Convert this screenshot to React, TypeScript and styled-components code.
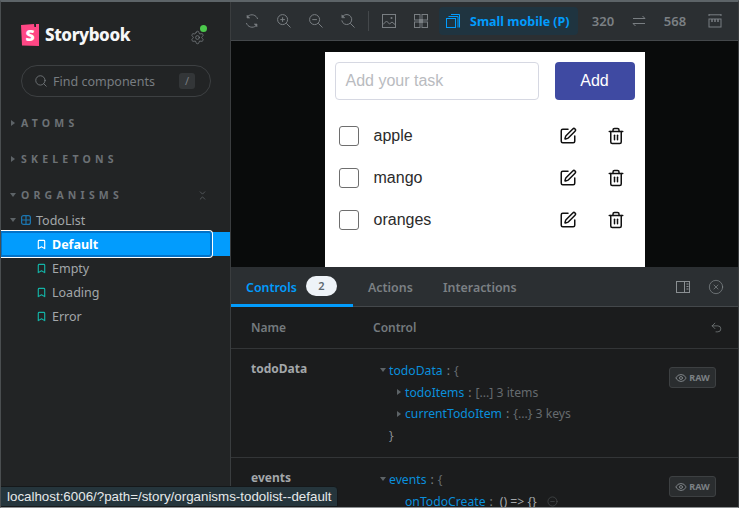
import React from 'react'
import styled, { createGlobalStyle } from 'styled-components'
import { Bookmark, ChevronsDownUp, Search, Settings, SquarePen, Trash2, Undo2, Eye, CircleX, CircleMinus } from 'lucide-react'

const GlobalStyle = createGlobalStyle`
  html, body {
    margin: 0;
    padding: 0;
    background: #222425;
  }
  * {
    box-sizing: border-box;
  }
`

const UI_FONT = `"Noto Sans", "Open Sans", sans-serif`
const BLUE = '#029cfd'

const Window = styled.div`
  position: relative;
  width: 739px;
  height: 508px;
  display: flex;
  overflow: hidden;
  border-top: 2px solid #5d6468;
  border-left: 1px solid #4a4e50;
  border-right: 1px solid #3c3f41;
  border-bottom: 1px solid #8d9092;
  font-family: ${UI_FONT};
  background: #222425;
`

// sidebar
const Sidebar = styled.aside`
  width: 230px;
  flex: none;
  display: flex;
  flex-direction: column;
  background: #222425;
  border-right: 1px solid #3a3d3f;
`
const Brand = styled.div`
  display: flex;
  align-items: center;
  height: 22px;
  margin: 22px 0 0 20px;
  padding-right: 25px;
`
const BrandName = styled.span`
  margin-left: 6px;
  font-size: 17px;
  line-height: 22px;
  font-weight: 800;
  color: #f6f7f8;
  letter-spacing: -0.4px;
`
const GearWrap = styled.div`
  position: relative;
  width: 15px;
  height: 15px;
  margin-left: auto;
  color: #7b8084;
`
const StatusDot = styled.span`
  position: absolute;
  top: -3px;
  right: -2px;
  width: 7px;
  height: 7px;
  border-radius: 50%;
  background: #4cc94c;
`
const SearchBox = styled.div`
  display: flex;
  align-items: center;
  width: 190px;
  height: 32px;
  margin: 19px 0 0 20px;
  padding: 0 15px 0 12px;
  border: 1px solid #3d4042;
  border-radius: 16px;
  color: #787d81;
  font-size: 12.5px;
`
const SearchLabel = styled.span`
  margin-left: 5px;
  flex: 1;
`
const Key = styled.span`
  width: 16px;
  height: 16px;
  border-radius: 3px;
  background: #333638;
  font-size: 11px;
  line-height: 16px;
  text-align: center;
`
const SectionList = styled.div`
  margin-top: 8px;
  display: flex;
  flex-direction: column;
`
const Section = styled.div`
  display: flex;
  align-items: center;
  height: 36px;
  padding: 0 22px 0 9px;
  color: #6c7175;
  font-size: 10.5px;
  font-weight: 700;
  letter-spacing: 0.4em;
`
const Caret = styled.span<{ $open?: boolean }>`
  flex: none;
  width: 11px;
  display: flex;
  justify-content: flex-start;
  &::before {
    content: '';
    display: block;
    ${(p) =>
      p.$open
        ? `margin-left: 0; border-left: 3.5px solid transparent; border-right: 3.5px solid transparent; border-top: 4px solid #5d6367;`
        : `margin-left: 1px; border-top: 3.5px solid transparent; border-bottom: 3.5px solid transparent; border-left: 4px solid #5d6367;`}
  }
`
const SectionAction = styled.span`
  margin-left: auto;
  display: flex;
  color: #6c7175;
`
const Tree = styled.div`
  position: relative;
  margin-top: -5px;
  display: flex;
  flex-direction: column;
`
const ComponentRow = styled.div`
  display: flex;
  align-items: center;
  height: 24px;
  padding-left: 9px;
  color: #a3a7aa;
  font-size: 12.5px;
`
const ComponentName = styled.span`
  margin-left: 5px;
`
const StoryRow = styled.div<{ $selected?: boolean }>`
  position: relative;
  display: flex;
  align-items: center;
  height: 24px;
  padding-left: 35px;
  color: ${(p) => (p.$selected ? '#fff' : '#a3a7aa')};
  background: ${(p) => (p.$selected ? BLUE : 'transparent')};
  font-size: 12.5px;
  font-weight: ${(p) => (p.$selected ? 700 : 400)};
  svg {
    color: ${(p) => (p.$selected ? '#fff' : '#13b3a6')};
  }
`
const StoryName = styled.span`
  margin-left: 5px;
`
const FocusRing = styled.span`
  position: absolute;
  top: -2px;
  bottom: -2px;
  left: -1px;
  width: 213px;
  border: 1px solid #fff;
  border-left: none;
  border-radius: 0 4px 4px 0;
  box-shadow: inset 0 0 0 2px #0272c8;
`

// main column
const Main = styled.main`
  flex: 1;
  min-width: 0;
  display: flex;
  flex-direction: column;
`
const Toolbar = styled.div`
  height: 39px;
  flex: none;
  display: flex;
  align-items: center;
  padding-left: 14px;
  background: #2b2f32;
  border-bottom: 1px solid #44484b;
  color: #797e82;
`
const ToolIcon = styled.span<{ $gap?: number }>`
  width: 14px;
  height: 14px;
  flex: none;
  display: flex;
  margin-right: ${(p) => p.$gap ?? 18}px;
`
const ToolDivider = styled.span`
  width: 1px;
  height: 20px;
  margin: 0 13px 0 -1px;
  background: #44484b;
`
const ViewportButton = styled.div`
  display: flex;
  align-items: center;
  height: 28px;
  width: 139px;
  margin: 0 13px 0 -7px;
  padding-left: 7px;
  border-radius: 4px;
  background: #1f3440;
  color: ${BLUE};
  font-size: 12.5px;
  font-weight: 700;
`
const ViewportLabel = styled.span`
  margin-left: 10px;
  white-space: nowrap;
`
const Dimension = styled.span`
  font-size: 13px;
  font-weight: 600;
  color: #7b8084;
  width: 24px;
  text-align: center;
`
const SwapSlot = styled.span`
  width: 14px;
  height: 14px;
  flex: none;
  display: flex;
  margin: 0 17px;
`
const RulerSlot = styled.span`
  width: 14px;
  height: 14px;
  flex: none;
  display: flex;
  margin-left: 21px;
`
const Canvas = styled.div`
  height: 226px;
  flex: none;
  display: flex;
  justify-content: center;
  padding-top: 11px;
  background: #090b0b;
`
const Frame = styled.div`
  width: 320px;
  background: #fff;
  padding: 10px;
  font-family: "Liberation Sans", Arial, sans-serif;
`
const TaskForm = styled.div`
  display: flex;
  justify-content: space-between;
`
const TaskInput = styled.div`
  width: 204px;
  height: 38px;
  padding: 0 10px;
  border: 1px solid #d6d8e2;
  border-radius: 4px;
  color: #b9bbc0;
  font-size: 16px;
  line-height: 36px;
`
const AddButton = styled.div`
  width: 80px;
  height: 38px;
  border-radius: 4px;
  background: #3f4aa2;
  color: #fff;
  font-size: 16px;
  font-weight: 500;
  line-height: 38px;
  text-align: center;
`
const TaskList = styled.div`
  margin: 15px -5px 0 0;
  display: flex;
  flex-direction: column;
`
const TaskRow = styled.div`
  display: flex;
  align-items: center;
  height: 42px;
  padding-left: 4px;
  color: #2b2b2b;
  font-size: 16px;
`
const Checkbox = styled.span`
  width: 20px;
  height: 20px;
  flex: none;
  border: 1px solid #6e6e6e;
  border-radius: 3px;
`
const TaskName = styled.span`
  margin-left: 15px;
  flex: 1;
`
const TaskAction = styled.span`
  width: 48px;
  display: flex;
  justify-content: center;
  color: #111;
`

// addon panel
const Panel = styled.section`
  flex: 1;
  min-height: 0;
  overflow: hidden;
  display: flex;
  flex-direction: column;
  background: #1b1c1d;
`
const Tabs = styled.div`
  height: 40px;
  flex: none;
  display: flex;
  align-items: stretch;
  background: #2b2f32;
  border-bottom: 1px solid #44484b;
  padding-right: 14px;
`
const Tab = styled.div<{ $active?: boolean; $width: number }>`
  display: flex;
  align-items: center;
  gap: 9px;
  width: ${(p) => p.$width}px;
  padding: 3px 0 0 15px;
  margin-bottom: -1px;
  font-size: 12.4px;
  font-weight: 600;
  color: ${(p) => (p.$active ? BLUE : '#7b8084')};
  border-bottom: 3px solid ${(p) => (p.$active ? BLUE : 'transparent')};
`
const Badge = styled.span`
  width: 31px;
  height: 20px;
  margin-top: -3px;
  border-radius: 10px;
  background: #eef3f8;
  color: #5c6870;
  font-size: 11px;
  font-weight: 600;
  line-height: 20px;
  text-align: center;
`
const TabActions = styled.div`
  margin-left: auto;
  display: flex;
  align-items: center;
  gap: 18px;
  color: #8a8f92;
`
const Row = styled.div<{ $height: number }>`
  height: ${(p) => p.$height}px;
  flex: none;
  display: grid;
  grid-template-columns: 122px 1fr 70px;
  padding-left: 20px;
  border-bottom: 1px solid #333537;
`
const HeadCell = styled.div`
  display: flex;
  align-items: center;
  font-size: 12px;
  font-weight: 600;
  color: #747a7e;
`
const HeadAction = styled(HeadCell)`
  justify-content: flex-end;
  padding-right: 15px;
  color: #8a8f92;
`
const ArgName = styled.div`
  padding-top: 11px;
  font-size: 12px;
  font-weight: 700;
  line-height: 18px;
  color: #a3a7aa;
`
const JsonTree = styled.div`
  padding-top: 10.5px;
  font-size: 12.2px;
  white-space: nowrap;
`
const JsonLine = styled.div<{ $depth?: number }>`
  display: flex;
  align-items: center;
  height: 21.7px;
  padding-left: ${(p) => (p.$depth ?? 0) * 16 + 7}px;
  color: #666b6f;
`
const JsonCaret = styled(Caret)`
  width: 9px;
`
const JsonKey = styled.span`
  color: #0a8fdc;
`
const JsonLeaf = styled(JsonKey)`
  margin-left: 9px;
`
const JsonPunct = styled.span`
  color: #7b8084;
  margin: 0 4px;
`
const JsonClose = styled.span`
  margin-left: 9px;
  color: #8a8f92;
`
const JsonFn = styled.span`
  color: #a3a7aa;
  margin-left: 3px;
`
const MinusAction = styled.span`
  display: flex;
  margin-left: 10px;
  color: #55595c;
`
const RawCell = styled.div`
  padding: 18px 0 0 1px;
`
const RawButton = styled.div`
  display: flex;
  align-items: center;
  justify-content: center;
  gap: 2px;
  width: 47px;
  height: 21px;
  border: 1px solid #3d4042;
  border-radius: 3px;
  background: #2a2d2f;
  color: #7b8084;
  font-size: 9px;
  font-weight: 700;
`

const StatusBubble = styled.div`
  position: absolute;
  left: -1px;
  bottom: 0;
  height: 21px;
  padding: 0 5px 0 6px;
  border: 1px solid #15181a;
  border-radius: 0 4px 0 0;
  background: #25353c;
  color: #e6e9ea;
  font-family: "Liberation Sans", Arial, sans-serif;
  font-size: 13.35px;
  line-height: 19px;
  white-space: nowrap;
`

const Svg: React.FC<{ size?: number; children: React.ReactNode }> = ({ size = 14, children }) => (
  <svg width={size} height={size} viewBox="0 0 14 14" fill="none" stroke="currentColor" strokeWidth={1}>
    {children}
  </svg>
)

const Logo = () => (
  <svg width={18} height={22} viewBox="0 0 18 22">
    <path d="M0 1 L13 0 L13.4 3 L15 3 L15 0 L18 0 L18 22 L1 21.4 Z" fill="#ff4785" />
    <text x="9" y="16.5" fontSize="16" fontWeight={900} fill="#fff" textAnchor="middle" fontFamily="Noto Sans">S</text>
  </svg>
)

const SyncIcon = () => (
  <Svg>
    <path d="M3 2.2A6 6 0 0 1 12.6 5M11 11.8A6 6 0 0 1 1.4 9" />
    <path d="M2 1v3h3M12 13v-3H9" fill="currentColor" strokeWidth={0.6} />
  </Svg>
)
const ZoomInIcon = () => (
  <Svg>
    <circle cx="5.6" cy="5.6" r="5" />
    <path d="M9.3 9.3L13.5 13.5M3.3 5.6h4.6M5.6 3.3v4.6" />
  </Svg>
)
const ZoomOutIcon = () => (
  <Svg>
    <circle cx="5.6" cy="5.6" r="5" />
    <path d="M9.3 9.3L13.5 13.5M3.3 5.6h4.6" />
  </Svg>
)
const ZoomResetIcon = () => (
  <Svg>
    <path d="M2 2.2A5 5 0 1 1 .8 6.4M9.3 9.3L13.5 13.5" />
    <path d="M.8 .8v3h3z" fill="currentColor" strokeWidth={0.5} />
  </Svg>
)
const ImageIcon = () => (
  <Svg>
    <rect x=".5" y=".5" width="13" height="13" />
    <path d="M1 10.5l3.5-3.5 3 3 2.5-2 3 2.5" />
    <circle cx="9.5" cy="4" r="1" fill="currentColor" stroke="none" />
  </Svg>
)
const GridIcon = () => (
  <Svg>
    <rect x=".5" y=".5" width="5.5" height="5.5" />
    <rect x="8" y=".5" width="5.5" height="5.5" />
    <rect x=".5" y="8" width="5.5" height="5.5" />
    <rect x="8" y="8" width="5.5" height="5.5" />
    <rect x="5" y="5" width="4" height="4" fill="currentColor" stroke="none" />
  </Svg>
)
const ViewportIcon = () => (
  <svg width={14} height={14} viewBox="0 0 14 14" fill="none" stroke="currentColor" strokeWidth={1}>
    <rect x=".5" y="4.5" width="9" height="9" />
    <path d="M2.5 2.5h9.5v11M5 .5h8.5v13" />
  </svg>
)
const SwapIcon = () => (
  <Svg>
    <path d="M1 4.5h12M10.5 2l2.5 2.5M13 9.5H1M3.5 12L1 9.5" />
  </Svg>
)
const RulerIcon = () => (
  <Svg>
    <path d="M1 .8h12M1 0v2M13 0v2" />
    <rect x="1" y="5" width="12" height="8" />
    <path d="M4 5v3M7 5v3M10 5v3" strokeWidth={1.5} />
  </Svg>
)
const SidePanelIcon = () => (
  <Svg>
    <rect x=".5" y="1.5" width="13" height="11" />
    <path d="M8.5 1.5v11M10.5 4h2M10.5 6.5h2M10.5 9h2" />
  </Svg>
)
const ComponentIcon = () => (
  <svg width={10} height={10} viewBox="0 0 10 10" fill="none" stroke="#1c76b0" strokeWidth={1.2}>
    <rect x=".6" y=".6" width="8.8" height="8.8" rx="2" />
    <path d="M5 .6v8.8M.6 5h8.8" />
  </svg>
)

const stories = ['Default', 'Empty', 'Loading', 'Error']
const tasks = ['apple', 'mango', 'oranges']

const RawToggle = () => (
  <RawButton>
    <Eye size={12} />
    RAW
  </RawButton>
)

const App: React.FC = () => (
  <>
    <GlobalStyle />
    <Window>
      <Sidebar>
        <Brand>
          <Logo />
          <BrandName>Storybook</BrandName>
          <GearWrap>
            <Settings size={15} strokeWidth={1.2} />
            <StatusDot />
          </GearWrap>
        </Brand>
        <SearchBox>
          <Search size={14} strokeWidth={1.4} />
          <SearchLabel>Find components</SearchLabel>
          <Key>/</Key>
        </SearchBox>
        <SectionList>
          <Section><Caret />ATOMS</Section>
          <Section><Caret />SKELETONS</Section>
          <Section>
            <Caret $open />ORGANISMS
            <SectionAction><ChevronsDownUp size={11} strokeWidth={1.4} /></SectionAction>
          </Section>
        </SectionList>
        <Tree>
          <ComponentRow>
            <Caret $open />
            <ComponentIcon />
            <ComponentName>TodoList</ComponentName>
          </ComponentRow>
          {stories.map((name, i) => (
            <StoryRow key={name} $selected={i === 0}>
              <Bookmark size={11} strokeWidth={2.5} />
              <StoryName>{name}</StoryName>
              {i === 0 && <FocusRing />}
            </StoryRow>
          ))}
        </Tree>
      </Sidebar>
      <Main>
        <Toolbar>
          <ToolIcon><SyncIcon /></ToolIcon>
          <ToolIcon><ZoomInIcon /></ToolIcon>
          <ToolIcon><ZoomOutIcon /></ToolIcon>
          <ToolIcon $gap={14}><ZoomResetIcon /></ToolIcon>
          <ToolDivider />
          <ToolIcon><ImageIcon /></ToolIcon>
          <ToolIcon><GridIcon /></ToolIcon>
          <ViewportButton>
            <ViewportIcon />
            <ViewportLabel>Small mobile (P)</ViewportLabel>
          </ViewportButton>
          <Dimension>320</Dimension>
          <SwapSlot><SwapIcon /></SwapSlot>
          <Dimension>568</Dimension>
          <RulerSlot><RulerIcon /></RulerSlot>
        </Toolbar>
        <Canvas>
          <Frame>
            <TaskForm>
              <TaskInput>Add your task</TaskInput>
              <AddButton>Add</AddButton>
            </TaskForm>
            <TaskList>
              {tasks.map((task) => (
                <TaskRow key={task}>
                  <Checkbox />
                  <TaskName>{task}</TaskName>
                  <TaskAction><SquarePen size={18} strokeWidth={2} /></TaskAction>
                  <TaskAction><Trash2 size={18} strokeWidth={2} /></TaskAction>
                </TaskRow>
              ))}
            </TaskList>
          </Frame>
        </Canvas>
        <Panel>
          <Tabs>
            <Tab $active $width={122}>Controls<Badge>2</Badge></Tab>
            <Tab $width={75}>Actions</Tab>
            <Tab $width={120}>Interactions</Tab>
            <TabActions>
              <SidePanelIcon />
              <CircleX size={16} strokeWidth={1} />
            </TabActions>
          </Tabs>
          <Row $height={42}>
            <HeadCell>Name</HeadCell>
            <HeadCell>Control</HeadCell>
            <HeadAction><Undo2 size={13} strokeWidth={1.2} /></HeadAction>
          </Row>
          <Row $height={109}>
            <ArgName>todoData</ArgName>
            <JsonTree>
              <JsonLine>
                <JsonCaret $open /><JsonKey>todoData</JsonKey><JsonPunct>:</JsonPunct>{'{'}
              </JsonLine>
              <JsonLine $depth={1}>
                <JsonCaret /><JsonKey>todoItems</JsonKey><JsonPunct>:</JsonPunct>[...] 3 items
              </JsonLine>
              <JsonLine $depth={1}>
                <JsonCaret /><JsonKey>currentTodoItem</JsonKey><JsonPunct>:</JsonPunct>{'{...}'} 3 keys
              </JsonLine>
              <JsonLine><JsonClose>{'}'}</JsonClose></JsonLine>
            </JsonTree>
            <RawCell><RawToggle /></RawCell>
          </Row>
          <Row $height={60}>
            <ArgName>events</ArgName>
            <JsonTree>
              <JsonLine>
                <JsonCaret $open /><JsonKey>events</JsonKey><JsonPunct>:</JsonPunct>{'{'}
              </JsonLine>
              <JsonLine $depth={1}>
                <JsonLeaf>onTodoCreate</JsonLeaf><JsonPunct>:</JsonPunct>
                <JsonFn>{'() => {}'}</JsonFn>
                <MinusAction><CircleMinus size={11} strokeWidth={1.2} /></MinusAction>
              </JsonLine>
            </JsonTree>
            <RawCell><RawToggle /></RawCell>
          </Row>
        </Panel>
      </Main>
      <StatusBubble>localhost:6006/?path=/story/organisms-todolist--default</StatusBubble>
    </Window>
  </>
)

export default App
